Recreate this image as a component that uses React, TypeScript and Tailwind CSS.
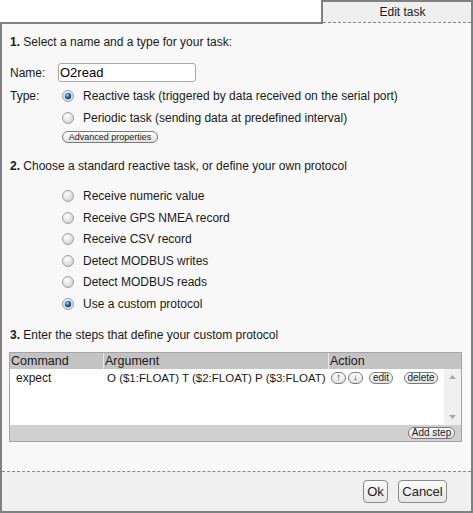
import React from "react";

// Radio drawn as svg so it looks like the old browser control
function Radio({ checked }: { checked?: boolean }) {
  return (
    <svg width="12" height="12" viewBox="0 0 12 12" className="shrink-0">
      <defs>
        <radialGradient id="rOff" cx="40%" cy="35%" r="70%">
          <stop offset="0%" stopColor="#ffffff" />
          <stop offset="100%" stopColor="#cfcfcf" />
        </radialGradient>
        <radialGradient id="rOn" cx="40%" cy="35%" r="65%">
          <stop offset="0%" stopColor="#a6dcfa" />
          <stop offset="55%" stopColor="#1d6fb0" />
          <stop offset="100%" stopColor="#0b3c6b" />
        </radialGradient>
      </defs>
      <circle cx="6" cy="6" r="5.5" fill="url(#rOff)" stroke="#a0a0a0" strokeWidth="1" />
      {checked && <circle cx="6" cy="6" r="3.2" fill="url(#rOn)" />}
    </svg>
  );
}

function Pill({
  children,
  className = "",
  small,
}: {
  children: React.ReactNode;
  className?: string;
  small?: boolean;
}) {
  return (
    <span
      className={
        "inline-flex items-center justify-center h-[12px] rounded-full border border-[#7a7a7a] bg-gradient-to-b from-white to-[#e2e2e2] leading-none text-[#222] whitespace-nowrap " +
        (small ? "text-[9px] " : "text-[10px] ") +
        className
      }
    >
      {children}
    </span>
  );
}

function RadioRow({ label, checked }: { label: string; checked?: boolean }) {
  return (
    <div className="flex items-center h-[21.6px] pl-[52px]">
      <Radio checked={checked} />
      <span className="ml-[9px]">{label}</span>
    </div>
  );
}

export default function App() {
  const choices = [
    "Receive numeric value",
    "Receive GPS NMEA record",
    "Receive CSV record",
    "Detect MODBUS writes",
    "Detect MODBUS reads",
    "Use a custom protocol",
  ];

  return (
    <div className="w-[473px] h-[513px] bg-white font-['Liberation_Sans',Arial,sans-serif] text-[12px] text-[#1a1a1a] flex flex-col">
      {/* tab strip */}
      <div className="flex h-[24px]">
        <div className="flex-1 border-b-2 border-[#808080]" />
        <div className="w-[152px] flex flex-col border-t-2 border-x-2 border-[#808080] bg-[#efefef]">
          <div className="h-[20px] flex items-center justify-center pl-[11px]">Edit task</div>
          <div className="h-0 border-t border-dashed border-[#8a8a8a]" />
          <div className="flex-1 bg-[#f8f8f8]" />
        </div>
      </div>

      {/* panel */}
      <div className="flex-1 flex flex-col border-x-2 border-b-2 border-[#808080] bg-[#f8f8f8]">
        <div className="h-[447px] pt-[11px] pl-[8px]">
          <div className="h-[14px] leading-[14px]">
            <b>1.</b> Select a name and a type for your task:
          </div>

          <div className="mt-[14px] flex items-center h-[19px]">
            <span className="w-[48px]">Name:</span>
            <div className="w-[138px] h-[19px] bg-white border border-[#a8a8a8] rounded-[3px] pl-[1px] flex items-center text-[13px] text-black">
              O2read
            </div>
          </div>

          <div className="mt-[3px] flex">
            <span className="w-[52px] h-[22px] leading-[22px]">Type:</span>
            <div className="flex flex-col">
              <div className="flex items-center h-[22px]">
                <Radio checked />
                <span className="ml-[9px]">Reactive task (triggered by data received on the serial port)</span>
              </div>
              <div className="flex items-center h-[22px]">
                <Radio />
                <span className="ml-[9px]">Periodic task (sending data at predefined interval)</span>
              </div>
              <div className="mt-[2px] flex">
                <Pill small className="w-[96px]">
                  Advanced properties
                </Pill>
              </div>
            </div>
          </div>

          <div className="mt-[16px] h-[14px] leading-[14px]">
            <b>2.</b> Choose a standard reactive task, or define your own protocol
          </div>

          <div className="mt-[12.2px]">
            {choices.map((c, i) => (
              <RadioRow key={c} label={c} checked={i === choices.length - 1} />
            ))}
          </div>

          <div className="mt-[13px] h-[14px] leading-[14px]">
            <b>3.</b> Enter the steps that define your custom protocol
          </div>

          {/* steps table */}
          <div className="mt-[10px] -ml-px w-[453px] border border-[#a4a4a4] flex flex-col">
            <div className="h-[16px] bg-[#c3c3c3] flex items-center text-[12.5px] text-[#1a1a1a]">
              <div className="w-[93px] pl-[1px] leading-[16px]">Command</div>
              <div className="w-[225px] border-l border-[#e6e6e6] pl-[1px] leading-[16px]">Argument</div>
              <div className="flex-1 border-l border-[#e6e6e6] pl-[1px] leading-[16px]">Action</div>
            </div>
            <div className="h-[56px] flex bg-white">
              <div className="flex-1 flex items-start h-[16px] mt-[1px]">
                <div className="w-[94px] pl-[6px] leading-[16px]">expect</div>
                <div className="w-[227px] pl-[3px] leading-[16px] whitespace-nowrap text-[11.5px]">
                  O ($1:FLOAT) T ($2:FLOAT) P ($3:FLOAT)
                </div>
                <div className="flex items-center h-[16px]">
                  <Pill small className="w-[15px] text-[#2b4f8c]">↑</Pill>
                  <Pill small className="w-[15px] ml-[2px] text-[#2b4f8c]">↓</Pill>
                  <Pill className="w-[24px] ml-[6px]">edit</Pill>
                  <Pill className="w-[34px] ml-[11px]">delete</Pill>
                </div>
              </div>
              <div className="w-[17px] bg-[#f0f0f0] flex flex-col items-center justify-between py-[6px]">
                <svg width="7" height="4" viewBox="0 0 7 4">
                  <path d="M0 4 L3.5 0 L7 4 Z" fill="#a8a8a8" />
                </svg>
                <svg width="7" height="4" viewBox="0 0 7 4">
                  <path d="M0 0 L3.5 4 L7 0 Z" fill="#a8a8a8" />
                </svg>
              </div>
            </div>
            <div className="h-[16px] bg-[#d0d0d0] flex items-center justify-end pr-[6px]">
              <Pill className="w-[47px]">Add step</Pill>
            </div>
          </div>
        </div>

        <div className="h-0 border-t border-dashed border-[#8a8a8a]" />

        <div className="flex-1 bg-[#f0f0f0] flex items-center justify-end pr-[24px] gap-[10px] text-[13px]">
          <button className="h-[23px] w-[25px] rounded-[4px] border border-[#8a8a8a] bg-gradient-to-b from-[#fbfbfb] to-[#e6e6e6] text-[#222]">
            Ok
          </button>
          <button className="h-[23px] w-[49px] rounded-[4px] border border-[#8a8a8a] bg-gradient-to-b from-[#fbfbfb] to-[#e6e6e6] text-[#222]">
            Cancel
          </button>
        </div>
      </div>
    </div>
  );
}
